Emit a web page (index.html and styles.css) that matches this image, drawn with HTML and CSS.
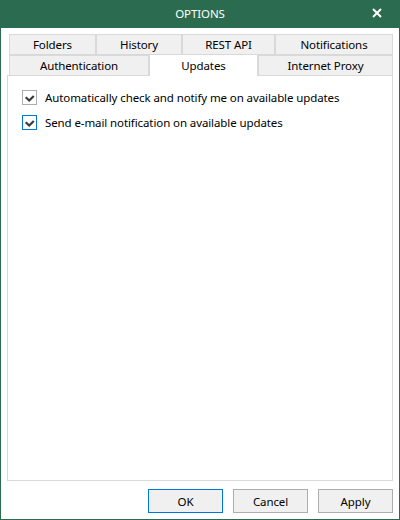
FILE: index.html
```html
<!DOCTYPE html>
<html>
<head>
<meta charset="utf-8">
<link rel="stylesheet" href="styles.css">
</head>
<body>
<div class="window">
  <div class="titlebar">
    <span class="title">OPTIONS</span>
    <svg class="close" width="10" height="10" viewBox="0 0 10 10"><path d="M1 1 L9 9 M9 1 L1 9" stroke="#fff" stroke-width="2" fill="none"/></svg>
  </div>
  <div class="content">
    <div class="tabrow row1">
      <div class="tab w-folders">Folders</div>
      <div class="tab w-history">History</div>
      <div class="tab w-rest">REST API</div>
      <div class="tab w-notif">Notifications</div>
    </div>
    <div class="tabrow row2">
      <div class="tab w-auth">Authentication</div>
      <div class="tab selected w-updates">Updates</div>
      <div class="tab w-proxy">Internet Proxy</div>
    </div>
    <div class="panel">
      <label class="check-row">
        <span class="box"><svg width="13" height="13" viewBox="0 0 13 13"><polyline points="2.7,6.3 6.2,9.5 10.8,5" fill="none" stroke="#3a3a3a" stroke-width="2.2"/></svg></span>
        <span class="label">Automatically check and notify me on available updates</span>
      </label>
      <label class="check-row">
        <span class="box focus"><svg width="13" height="13" viewBox="0 0 13 13"><polyline points="2.7,6.3 6.2,9.5 10.8,5" fill="none" stroke="#3a3a3a" stroke-width="2.2"/></svg></span>
        <span class="label">Send e-mail notification on available updates</span>
      </label>
    </div>
    <div class="buttons">
      <button class="btn default">OK</button>
      <button class="btn">Cancel</button>
      <button class="btn">Apply</button>
    </div>
  </div>
</div>
</body>
</html>
```
FILE: styles.css
```css
* { box-sizing: border-box; }
html, body { margin: 0; padding: 0; background: #fff; }
body {
  font-family: "Segoe UI", "Noto Sans", sans-serif;
  font-size: 11.5px;
  letter-spacing: -0.1px;
  color: #000;
}
.window {
  width: 400px;
  height: 520px;
  border: 1px solid #2b6b4f;
  border-top: none;
  display: flex;
  flex-direction: column;
  background: #fff;
}
.titlebar {
  height: 28px;
  margin: 0 -1px;
  background: #2b6b4f;
  color: #fff;
  display: flex;
  align-items: center;
  justify-content: center;
  position: relative;
}
.title { font-size: 11.5px; line-height: 28px; }
.close { position: absolute; right: 18px; top: 8px; }
.content {
  flex: 1;
  padding: 6px 6px 6px 6px;
  display: flex;
  flex-direction: column;
}
.tabrow { display: flex; margin-left: 2px; }
.row1 { height: 21px; }
.row2 { height: 20px; align-items: flex-end; }
.tab {
  background: #f0f0f0;
  border: 1px solid #d9d9d9;
  text-align: center;
  display: flex;
  align-items: center;
  justify-content: center;
}
.row1 .tab { height: 21px; }
.row2 .tab { height: 20px; border-bottom: none; }
.row2 .tab.selected {
  height: 22px;
  margin-bottom: -1px;
  background: #fff;
  position: relative;
  z-index: 2;
  padding-bottom: 1px;
}
.w-folders { width: 87px; }
.w-history { width: 86px; }
.w-rest { width: 93px; }
.w-notif { width: 118px; }
.w-auth { width: 140px; }
.w-updates { width: 109px; }
.w-proxy { width: 135px; }
.panel {
  height: 406px;
  border: 1px solid #d9d9d9;
  padding: 9px 0 0 14px;
  display: flex;
  flex-direction: column;
  position: relative;
  z-index: 1;
  background: #fff;
}
.check-row {
  display: flex;
  align-items: center;
  height: 25px;
}
.box {
  width: 15px;
  height: 15px;
  border: 1px solid #adadad;
  background: #fff;
  display: flex;
  flex: none;
}
.box.focus { border-color: #0078d7; }
.label { margin-left: 8px; }
.buttons {
  margin-top: 8px;
  display: flex;
  justify-content: flex-end;
  gap: 10px;
}
.btn {
  width: 75px;
  height: 24px;
  border: 1px solid #adadad;
  background: #f0f0f0;
  font-family: inherit;
  font-size: 11.5px;
  letter-spacing: -0.1px;
  color: #000;
  padding: 0;
}
.btn.default { border-color: #0078d7; }
```
